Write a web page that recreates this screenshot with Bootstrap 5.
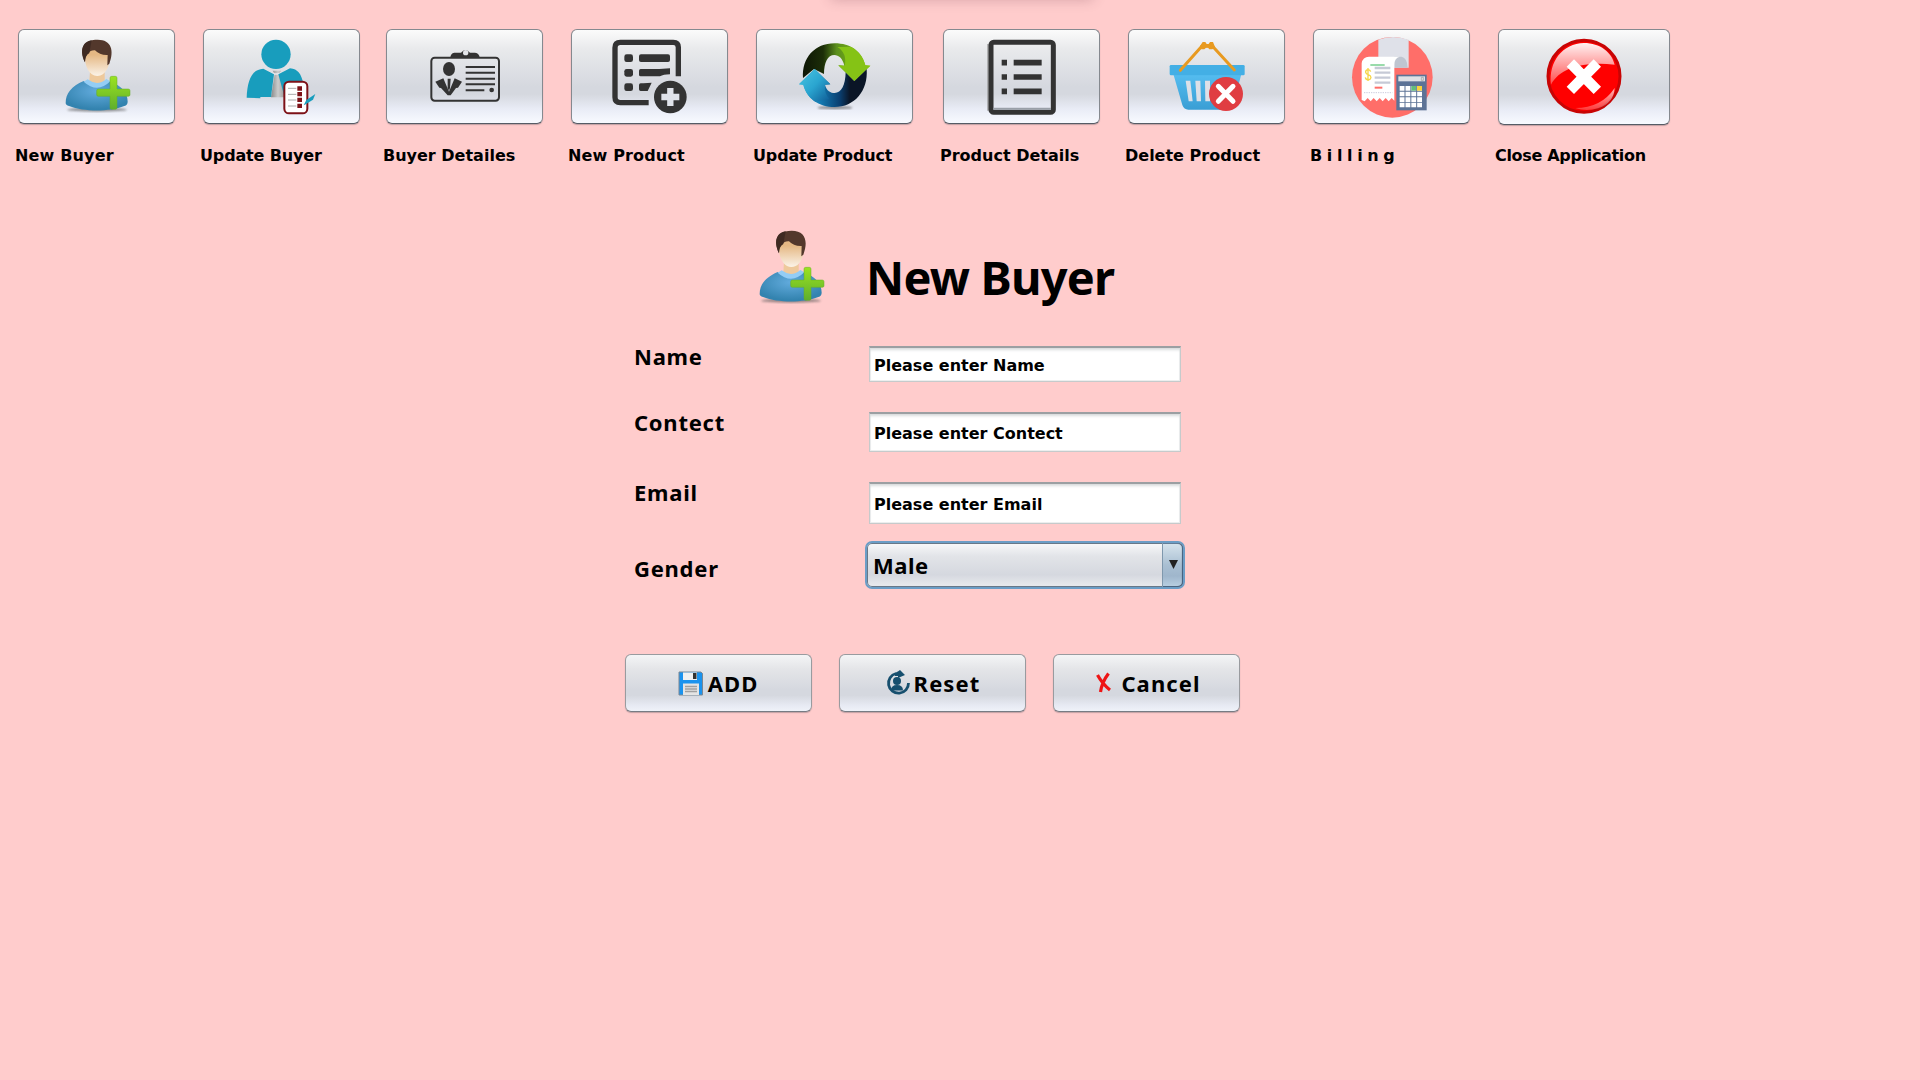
<!DOCTYPE html>
<html lang="en">
<head>
<meta charset="utf-8">
<title>New Buyer</title>
<link rel="stylesheet" href="https://cdn.jsdelivr.net/npm/bootstrap@5.3.0/dist/css/bootstrap.min.css">
<style>
body{width:1920px;height:1080px;overflow:hidden;background:#fcc;color:#000;font-family:"Noto Sans",sans-serif;font-weight:700;position:relative}
.top-shade{position:absolute;left:832px;top:-10px;width:260px;height:8px;box-shadow:0 0 13px 1px rgba(90,40,60,.3)}
.toolbar{display:grid;grid-template-columns:185px 183px 185px 185px 187px 185px 185px 185px 173px;padding:29px 0 0 18px}
.metal{border:1px solid #85898f;border-bottom-color:#565c66;border-radius:6px;padding:0;background:linear-gradient(#fbfbfb,#e9eaec 20%,#d5d8df 61%,#d5d8df 69%,#e9ecf6 85%,#f8faff);box-shadow:0 1px 1px rgba(80,80,90,.35)}
.tool{width:157px;height:95px}
.tool-close{width:172px;height:96px}
.tool svg{width:84px;height:84px}
.tool-text{font-family:"DejaVu Sans",sans-serif;font-size:16px;line-height:20px;margin:22px 0 0 -3px;white-space:pre}
.tool-close + .tool-text{margin-top:21px}
.ls-up{letter-spacing:.15px}.ls-down{letter-spacing:-.15px}.ls-tight{letter-spacing:-.32px}.ls-bill{letter-spacing:-.47px}
.page-title{height:177px;padding:60px 0 0 749px}
.page-title svg{width:84px;height:84px}
.page-title h1{font-size:47px;line-height:54px;font-weight:700;letter-spacing:-.8px;margin:24px 0 0 33px}
.entry{padding-left:634px}
.r66{height:66px}.r70{height:70px}.r62{height:62px}.r113{height:113px}
.entry label{width:235px;font-size:22px;line-height:26px;letter-spacing:.75px}
.entry .lab-low{margin-top:14px;width:231px}
.entry .form-control{font-family:"DejaVu Sans",sans-serif;width:312px;margin-top:3px;padding:2px 4px 0;border:1px solid #c6cacb;border-top:2px solid #9b9fa2;border-radius:0;font-size:16px;font-weight:700;color:#000;box-shadow:inset 0 3px 3px -1px #d9dcdd,inset 0 0 0 1px #eceeee}
.h36{height:36px}.h40{height:40px}.h42{height:42px}
.combo{width:320px;height:48px;border:2px solid #6b9dc6;border-radius:7px;background:linear-gradient(#f8f9fa,#e2e4e8 30%,#d5d8df 72%,#e6e8ec 95%);box-shadow:inset 0 0 0 1px #687888;padding-left:6px;font-size:22px;letter-spacing:.5px}
.combo-arrow{width:21px;height:44px;border-left:1px solid #7f98ad;border-radius:0 5px 5px 0;background:linear-gradient(#d7e4ed,#a9bfd2 50%,#9fb6cc 75%,#b9d0e2);box-shadow:inset -1px 0 1px #3e5a78,inset 0 -1px 0 #4d6781,inset 0 1px 0 #68809a}
.actions{padding-left:625px;gap:27px}
.actions .metal{width:187px;height:58px;padding-right:2px;font-size:22px;line-height:26px;font-weight:700;color:#000;letter-spacing:1.1px;border-color:#999b9f #999b9f #777b83;background:linear-gradient(#f4f5f6,#e4e5e8 25%,#d5d8df 62%,#d5d8df 72%,#e7eaf3 90%,#eff2f9)}
.actions svg{width:28px;height:28px;margin-right:3px}
</style>
<script src="https://cdn.jsdelivr.net/npm/bootstrap@5.3.0/dist/js/bootstrap.bundle.min.js"></script>
</head>
<body>
<svg width="0" height="0" class="position-absolute">
<defs>
<linearGradient id="face" x2="0" y2="1"><stop offset=".2" stop-color="#e5b884"/><stop offset="1" stop-color="#fbf3e8"/></linearGradient>
<radialGradient id="shirt" cx=".5" cy=".35" r=".6"><stop stop-color="#62abdd"/><stop offset="1" stop-color="#3383af"/></radialGradient>
<linearGradient id="plus" x2="0" y2="1"><stop stop-color="#9be321"/><stop offset="1" stop-color="#5fae2c"/></linearGradient>
<linearGradient id="green" x2="1"><stop stop-color="#0d1505"/><stop offset=".3" stop-color="#1c2e08"/><stop offset=".5" stop-color="#5b8f1c"/><stop offset="1" stop-color="#8dcb14"/></linearGradient>
<linearGradient id="blue" x2="1"><stop stop-color="#35b6d8"/><stop offset=".3" stop-color="#147db5"/><stop offset=".6" stop-color="#0a3f70"/><stop offset=".75" stop-color="#0a1526"/></linearGradient>
<linearGradient id="arrow" x2="1" y2="1"><stop stop-color="#4cc6e2"/><stop offset=".5" stop-color="#2aa5d0"/><stop offset="1" stop-color="#0e5a94"/></linearGradient>
<linearGradient id="basket" x2="0" y2="1"><stop stop-color="#55bdf0"/><stop offset="1" stop-color="#3a9ed4"/></linearGradient>
<linearGradient id="gloss" x2="0" y2="1"><stop stop-color="#fff" stop-opacity=".95"/><stop offset="1" stop-color="#fff" stop-opacity=".3"/></linearGradient>
<linearGradient id="tie" x2="1"><stop stop-color="#888"/><stop offset=".5" stop-color="#ccc"/><stop offset="1" stop-color="#999"/></linearGradient>
<filter id="soft"><feGaussianBlur stdDeviation="3"/></filter>
<symbol id="buyer" viewBox="163 103 252 252">
<ellipse cx="289" cy="327" rx="90" ry="6" fill="#555" opacity=".6" filter="url(#soft)"/>
<path d="M268 212h44v32l-20 16-26-16z" fill="#eec99c"/>
<path d="M195 307c0-28 17-50 54-66q40 28 78 0c35 14 54 34 54 62q0 10-10 13c-45 18-120 18-166 0q-10-3-10-9z" fill="url(#shirt)"/>
<path d="M249 243l12-7q29 22 56-1l12 7q-39 38-80 1z" fill="#93cdf5"/>
<path d="M252 163l15-17h45l16 18c0 34-13 62-38 62s-38-30-38-63z" fill="url(#face)"/>
<path d="M253 185c-22-45 0-68 38-68 42 0 50 33 35 72l-6 5 1-31q-24 1-38-14-14-1-20 9-10 4-10 27z" fill="#53382c"/>
<path d="M253 185c-18-42-4-62 20-66l-7 38q-13 8-13 28z" fill="#3f2a22"/>
<path d="M333 227h11q5 0 5 5v33h34q5 0 5 5v12q0 5-5 5h-34v34q0 5-5 5h-11q-5 0-5-5v-34h-35q-5 0-5-5v-12q0-5 5-5h35v-33q0-5 5-5z" fill="url(#plus)" stroke="#65ad24" stroke-width="1.5"/>
</symbol>
</defs>
</svg>
<div class="top-shade"></div>
<nav class="toolbar">
<div><button class="metal tool d-flex align-items-center justify-content-center"><svg><use href="#buyer"/></svg></button><div class="tool-text ls-up">New Buyer</div></div>
<div><button class="metal tool d-flex align-items-center justify-content-center"><svg viewBox="716 103 252 252">
<circle cx="824" cy="161" r="44" fill="#189dbd"/>
<path d="M809 290l11-70-6-10h25l-5 10 17 70z" fill="url(#tie)"/><path d="M790 203q33 30 70 0l-14 19h-44z" fill="#e6e8ec"/>
<path d="M736 291c2-50 14-85 50-87l32 17-9 68h-32v4zM831 221l35-18c24 2 34 18 39 43l-48-3-9 40z" fill="#189dbd"/>
<rect x="849" y="243" width="69" height="95" rx="14" fill="#fff" stroke="#7d1218" stroke-width="6"/>
<path d="M860 263h25M860 281h25M860 298h25M860 316h25" stroke="#aaa" stroke-width="3"/>
<path d="M895 257v13M895 274v13M895 291v13M895 309v13" stroke="#7d1218" stroke-width="14"/>
<path d="M907 314l8-16 27-18-7 17-22 14z" fill="#189dbd"/></svg></button><div class="tool-text ls-down">Update Buyer</div></div>
<div><button class="metal tool d-flex align-items-center justify-content-center"><svg viewBox="159 103 252 252">
<rect x="184" y="171" width="203" height="129" rx="10" fill="none" stroke="#333" stroke-width="6"/>
<path d="M241 172q0-14 12-16h20q13-16 27 0h15q14 2 14 16z" fill="#333"/><circle cx="287" cy="156" r="8" fill="#e4e5e9"/>
<ellipse cx="237" cy="205" rx="18" ry="21" fill="#333"/>
<path d="M196 243l24-10 17 40 17-40 22 10-12 18-6 1-16 22h-9l-20-22-5-1zM233 234h9l-2 28-3 8-4-8z" fill="#333"/>
<path d="M287 199h88M287 216h88M287 234h88M287 251h88M287 269h56" stroke="#333" stroke-width="6"/><circle cx="365" cy="268" r="7" fill="#333"/></svg></button><div class="tool-text">Buyer Detailes</div></div>
<div><button class="metal tool d-flex align-items-center justify-content-center"><svg viewBox="714 103 252 252">
<path d="M836 306h-85q-16 0-16-16V141q0-16 16-16h159q15 0 15 15v87" fill="none" stroke="#333" stroke-width="16"/>
<g fill="#333"><rect x="763" y="161" width="26" height="23" rx="7"/><rect x="763" y="205" width="26" height="23" rx="7"/><rect x="763" y="248" width="26" height="23" rx="7"/><rect x="807" y="161" width="93" height="23" rx="6"/><path d="M812 205h56l32-2v18q-20 0-30 6h-58q-5 0-5-5v-12q0-5 5-5zM812 248h8l25-2-12 25h-21q-5 0-5-5v-13q0-5 5-5z"/>
<circle cx="901" cy="289" r="49"/></g><path d="M901 262v54M874 289h54" stroke="#dfe2e9" stroke-width="19"/></svg></button><div class="tool-text ls-up">New Product</div></div>
<div><button class="metal tool d-flex align-items-center justify-content-center"><svg viewBox="161 103 252 252">
<ellipse cx="287" cy="321" rx="52" ry="5" fill="#444" opacity=".6" filter="url(#soft)"/>
<path d="M191 232c-4-60 35-104 95-104 48 0 82 25 92 66l15 1-48 46-48-47 18 1c-5-22-17-32-30-32-20 0-31 23-31 57l-30-15z" fill="url(#green)"/>
<path d="M382 205c5 66-37 114-96 114-48 0-85-27-94-67l-13-1 47-46 47 46-16 1c5 19 17 25 29 25 20 0 32-23 33-62l26 26z" fill="url(#blue)"/>
<path d="M297 194l48 47 48-46-15-1c-6-26-22-43-42-55l-42 0q30 18 22 56z" fill="#85c315"/><path d="M226 205l-47 46 13 1c6 22 18 40 36 51l42-8q-16-18-13-43l16-1z" fill="url(#arrow)"/></svg></button><div class="tool-text ls-down">Update Product</div></div>
<div><button class="metal tool d-flex align-items-center justify-content-center"><svg viewBox="718 103 252 252">
<path d="M742 130v200" stroke="#999" stroke-width="4"/><rect x="751" y="125" width="187" height="210" rx="8" fill="none" stroke="#333" stroke-width="15"/><path d="M758 324h173" stroke="#9aa0a8" stroke-width="6"/>
<path d="M819 186h84M819 229h84M819 272h84M783 186h16M783 229h16M783 272h16" stroke="#333" stroke-width="17"/></svg></button><div class="tool-text">Product Details</div></div>
<div><button class="metal tool d-flex align-items-center justify-content-center"><svg viewBox="163 103 252 252">
<path d="M188 220h204l-24 93q-4 14-15 14H233q-13 0-18-14z" fill="url(#basket)"/><rect x="177" y="193" width="225" height="31" rx="4" fill="#43afe5"/>
<path d="M225 240h14l7 62h-12zM254 240h15l2 62h-13zM283 240h15v62h-14z" fill="#dde0e7"/>
<path d="M209 209l65-73h31l66 72" fill="none" stroke="#e89a20" stroke-width="9" stroke-linecap="round" stroke-linejoin="round"/><path d="M268 136l8-12h8l4 6h6l4-6h9l6 15-8 7h-9l-4-5h-6l-5 5h-9z" fill="#e89a20"/>
<circle cx="346" cy="280" r="51" fill="#e03d42"/><path d="M323 257l44 45M367 257l-44 45" stroke="#fff" stroke-width="15" stroke-linecap="round"/></svg></button><div class="tool-text">Delete Product</div></div>
<div><button class="metal tool d-flex align-items-center justify-content-center"><svg viewBox="718 103 252 252">
<circle cx="845" cy="230" r="121" fill="#ff6e69"/><path d="M803 117q43-16 91 0v84h-91z" fill="#dfe1e9"/>
<path d="M851 168h22q17 4 18 33h-40z" fill="#bfc5d0"/><path d="M753 298V188q3-20 22-20h92q-16 4-16 24v108l-8-8-9 10-9-10-9 10-9-10-9 10-9-10-9 10-9-10-9 10z" fill="#fff"/>
<path d="M779 193h43" stroke="#66c980" stroke-width="4"/><path d="M792 202h47M792 216h47M792 231h47M792 246h47" stroke="#c6cad6" stroke-width="7"/><path d="M792 261h23" stroke="#ff6e69" stroke-width="6"/><path d="M760 276h85" stroke="#ccd" stroke-width="3" stroke-dasharray="4 3"/>
<path d="M780 213q-2-7-9-6-7 2-6 8 1 5 8 7 8 3 8 9-2 7-9 6-7 0-8-7M772 202v39" fill="none" stroke="#f6d548" stroke-width="4"/>
<rect x="857" y="222" width="91" height="107" fill="#5d7396"/><rect x="863" y="227" width="80" height="15" fill="#dfe1e6"/><path d="M932 230h6v9h-6z" fill="none" stroke="#999" stroke-width="2"/>
<path d="M867 263h68M867 280h68M867 297h68M867 313h68" stroke="#fff" stroke-width="14" stroke-dasharray="14.5 3"/><path d="M902 256h14v14h-14z" fill="#61bd7b"/><path d="M919 256h15v14h-15z" fill="#f9d33c"/></svg></button><div class="tool-text ls-bill">B i l l i n g</div></div>
<div><button class="metal tool tool-close d-flex align-items-center justify-content-center"><svg viewBox="215 105 252 252">
<circle cx="341" cy="229" r="108" fill="#f00" stroke="#c80404" stroke-width="9"/><path d="M242 254c-8-70 35-123 99-125 48 0 84 28 92 65-90-10-164 8-191 60z" fill="url(#gloss)"/><path d="M315 324q78 0 118-60-2 44-49 61-37 11-69-1z" fill="url(#gloss)" opacity=".75"/>
<path d="M300 189l81 82M381 189l-81 82" stroke="#fff" stroke-width="31"/></svg></button><div class="tool-text ls-tight">Close Application</div></div>
</nav>
<main>
<div class="page-title d-flex"><svg><use href="#buyer"/></svg><h1>New Buyer</h1></div>
<form>
<div class="entry r66 d-flex align-items-start"><label for="n">Name</label><input id="n" class="form-control h36" value="Please enter Name"></div>
<div class="entry r70 d-flex align-items-start"><label for="c">Contect</label><input id="c" class="form-control h40" value="Please enter Contect"></div>
<div class="entry r62 d-flex align-items-start"><label for="e">Email</label><input id="e" class="form-control h42" value="Please enter Email"></div>
<div class="entry r113 d-flex align-items-start"><label class="lab-low">Gender</label><div class="combo d-flex align-items-center justify-content-between"><span>Male</span><span class="combo-arrow d-flex align-items-center justify-content-center"><svg width="9" height="10" viewBox="0 0 9 10"><path d="M0 0h9L4.500 9z" fill="#222"/></svg></span></div></div>
<div class="actions d-flex">
<button type="button" class="metal d-flex align-items-center justify-content-center"><svg viewBox="0 0 28 28"><path d="M2 3h22l1.500 1.500V26H2z" fill="#1b93ee" stroke="#7b8793"/><path d="M6 3.500h14V11H6z" fill="#f1f1f1"/><path d="M16 4h3.500v6H16z" fill="#333"/><path d="M6 14.500h16V26H6z" fill="#e4e4e4"/><path d="M8 17.500h12M8 20h12M8 22.500h12" stroke="#a0a0a0" stroke-width="1.300"/></svg>ADD</button>
<button type="button" class="metal d-flex align-items-center justify-content-center"><svg viewBox="0 0 28 28"><path d="M13 4.500a10 10 0 1 0 12.500 9.500" fill="none" stroke="#164f6e" stroke-width="2.800"/><path d="M12 4q4-2 5-3l5 5-7 3v-2h-3z" fill="#164f6e"/><circle cx="14" cy="12" r="4" fill="#164f6e"/><path d="M8 21.500q0-5.500 6-5.500t6 5.500z" fill="#164f6e"/></svg>Reset</button>
<button type="button" class="metal d-flex align-items-center justify-content-center"><svg viewBox="0 0 28 28"><path d="M7.500 6q5 9 12.500 15M18.500 4.500Q12 13 10.500 23" fill="none" stroke="#ee1515" stroke-width="3.200"/></svg>Cancel</button>
</div>
</form>
</main>
</body>
</html>
